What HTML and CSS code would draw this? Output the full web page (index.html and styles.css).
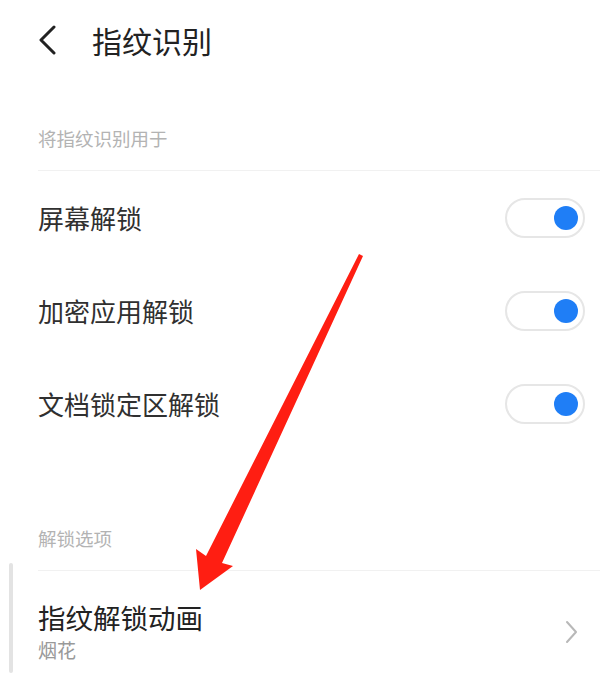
FILE: index.html
```html
<!DOCTYPE html>
<html lang="zh">
<head>
<meta charset="utf-8">
<title>指纹识别</title>
<link rel="stylesheet" href="styles.css">
</head>
<body>
<div class="page">
  <header class="topbar">
    <svg class="back" width="22" height="30" viewBox="0 0 22 30"><path d="M17 2 L4 15 L17 28" fill="none" stroke="#222" stroke-width="3" stroke-linecap="round" stroke-linejoin="round"/></svg>
    <h1 class="title">指纹识别</h1>
  </header>

  <section class="group group-first">
    <div class="group-head">将指纹识别用于</div>
    <div class="row">
      <span class="row-label">屏幕解锁</span>
      <span class="toggle"><span class="knob"></span></span>
    </div>
    <div class="row">
      <span class="row-label">加密应用解锁</span>
      <span class="toggle"><span class="knob"></span></span>
    </div>
    <div class="row">
      <span class="row-label">文档锁定区解锁</span>
      <span class="toggle"><span class="knob"></span></span>
    </div>
  </section>

  <section class="group group-second">
    <div class="group-head">解锁选项</div>
    <div class="row row-nav">
      <div class="nav-text">
        <span class="nav-title">指纹解锁动画</span>
        <span class="nav-sub">烟花</span>
      </div>
      <svg class="chev" width="14" height="24" viewBox="0 0 14 24"><path d="M3 2 L12 12 L3 22" fill="none" stroke="#b8b8b8" stroke-width="2" stroke-linecap="round" stroke-linejoin="round"/></svg>
    </div>
  </section>

  <svg class="overlay" width="600" height="684" viewBox="0 0 600 684">
    <rect x="9" y="563" width="4" height="110" rx="2" fill="#e3e3e3"/>
    <polygon points="359,254 363,256 222,563 233,566 200,590 196,549 206,556" fill="#ff1e12"/>
  </svg>
</div>
</body>
</html>
```

FILE: styles.css
```css
html, body {
  margin: 0;
  padding: 0;
  background: #ffffff;
}

body {
  font-family: "Noto Sans CJK SC", "Noto Sans", sans-serif;
  color: #333333;
}

.page {
  position: relative;
  width: 600px;
  height: 684px;
  overflow: hidden;
}

.topbar {
  height: 80px;
  display: flex;
  align-items: center;
  padding-left: 37px;
}

.back {
  display: block;
}

.title {
  margin: 0 0 0 33px;
  font-size: 30px;
  font-weight: 400;
  line-height: 40px;
  color: #222222;
}

.group {
  margin-left: 38px;
}

.group-head {
  font-size: 18.5px;
  line-height: 24px;
  color: #b3b3b3;
  padding-bottom: 20px;
  border-bottom: 1px solid #f1f1f1;
}

.group-first .group-head {
  padding-top: 46px;
}

.group-second .group-head {
  padding-top: 76px;
}

.row {
  height: 93px;
  display: flex;
  align-items: center;
  justify-content: space-between;
  padding-right: 15px;
}

.row-label {
  font-size: 26px;
  line-height: 34px;
  color: #303030;
}

.toggle {
  box-sizing: border-box;
  width: 80px;
  height: 40px;
  border: 2px solid #e6e6e6;
  border-radius: 20px;
  display: flex;
  align-items: center;
  justify-content: flex-end;
  padding-right: 5px;
}

.knob {
  width: 24px;
  height: 24px;
  border-radius: 50%;
  background: #1f7ef6;
}

.row-nav {
  height: auto;
  padding-top: 28px;
  padding-right: 22px;
  align-items: flex-start;
}

.nav-text {
  display: flex;
  flex-direction: column;
  gap: 3px;
}

.nav-title {
  font-size: 27.5px;
  line-height: 36px;
  color: #222222;
}

.nav-sub {
  font-size: 19px;
  line-height: 24px;
  color: #999999;
}

.chev {
  display: block;
  margin-top: 21px;
}

.overlay {
  position: absolute;
  left: 0;
  top: 0;
  pointer-events: none;
}
```
